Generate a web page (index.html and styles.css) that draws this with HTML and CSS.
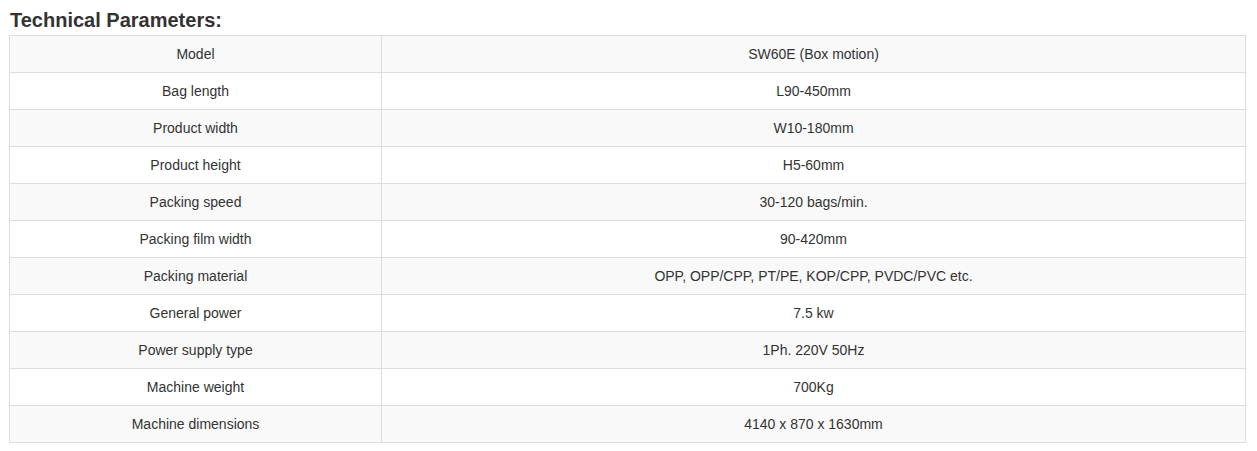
FILE: index.html
```html
<!DOCTYPE html>
<html>
<head>
<meta charset="utf-8">
<link rel="stylesheet" href="styles.css">
</head>
<body>
<div class="page">
  <h2 class="title">Technical Parameters:</h2>
  <table class="params">
    <colgroup><col class="c1"><col class="c2"></colgroup>
    <tbody>
      <tr><td>Model</td><td>SW60E (Box motion)</td></tr>
      <tr><td>Bag length</td><td>L90-450mm</td></tr>
      <tr><td>Product width</td><td>W10-180mm</td></tr>
      <tr><td>Product height</td><td>H5-60mm</td></tr>
      <tr><td>Packing speed</td><td>30-120 bags/min.</td></tr>
      <tr><td>Packing film width</td><td>90-420mm</td></tr>
      <tr><td>Packing material</td><td>OPP, OPP/CPP, PT/PE, KOP/CPP, PVDC/PVC etc.</td></tr>
      <tr><td>General power</td><td>7.5 kw</td></tr>
      <tr><td>Power supply type</td><td>1Ph. 220V 50Hz</td></tr>
      <tr><td>Machine weight</td><td>700Kg</td></tr>
      <tr><td>Machine dimensions</td><td>4140 x 870 x 1630mm</td></tr>
    </tbody>
  </table>
</div>
</body>
</html>
```
FILE: styles.css
```css
html, body {
  margin: 0;
  padding: 0;
  background: #fff;
}
body {
  font-family: "Liberation Sans", Arial, sans-serif;
  color: #333;
}
.page {
  padding: 9px 11px 0 9px;
}
.title {
  margin: 0 0 4px 1px;
  font-size: 20px;
  line-height: 22px;
  font-weight: bold;
  color: #333;
}
.params {
  width: 100%;
  border-collapse: collapse;
  border: 1px solid #ddd;
  font-size: 14px;
  line-height: 20px;
}
.params .c1 { width: 372px; }
.params td {
  border: 1px solid #ddd;
  padding: 8px;
  text-align: center;
  vertical-align: top;
}
.params tr:nth-child(odd) td {
  background: #f9f9f9;
}
```
